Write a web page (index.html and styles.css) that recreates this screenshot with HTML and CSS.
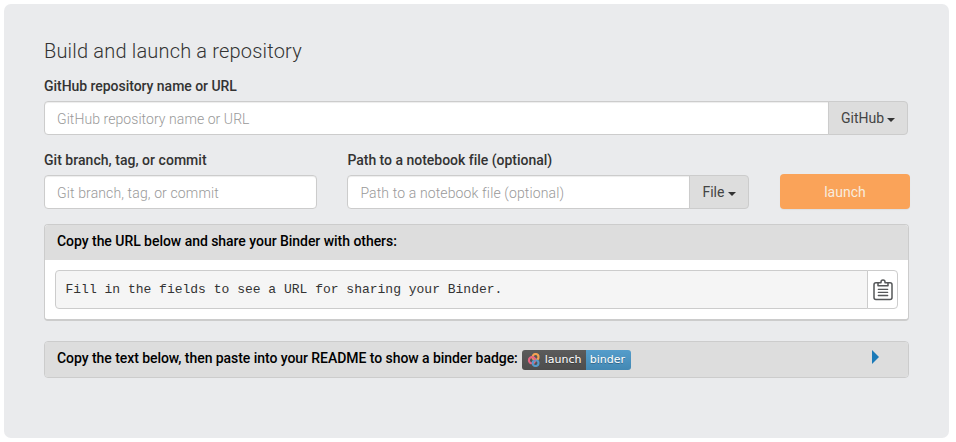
FILE: index.html
```html
<!DOCTYPE html>
<html lang="en">
<head>
<meta charset="utf-8">
<title>Binder</title>
<link rel="stylesheet" href="styles.css">
</head>
<body>
<form class="launcher">
  <h1 class="title">Build and launch a repository</h1>
  <label class="label label-repo">GitHub repository name or URL</label>
  <div class="group repo">
    <div class="field hint-repo">GitHub repository name or URL</div>
    <button type="button" class="select provider"><span>GitHub</span><i class="caret"></i></button>
  </div>
  <div class="row">
    <div class="ref">
      <label class="label label-ref">Git branch, tag, or commit</label>
      <div class="field hint-ref">Git branch, tag, or commit</div>
    </div>
    <div class="path">
      <label class="label label-path">Path to a notebook file (optional)</label>
      <div class="group">
        <div class="field hint-path">Path to a notebook file (optional)</div>
        <button type="button" class="select kind"><span>File</span><i class="caret"></i></button>
      </div>
    </div>
    <button type="button" class="launch">launch</button>
  </div>
  <section class="card share">
    <div class="heading"><span class="share-text">Copy the URL below and share your Binder with others:</span></div>
    <div class="body">
      <pre class="url">Fill in the fields to see a URL for sharing your Binder.</pre>
      <button type="button" class="copy" aria-label="Copy">
        <svg width="20" height="22" viewBox="0 0 20 22" fill="none" stroke="#555759" stroke-width="1.500" stroke-linejoin="round">
          <path d="M5.500 3.800H3q-2 0-2 2v12.700q0 2 2 2h14q2 0 2-2V5.800q0-2-2-2h-2.500"/>
          <path d="M5 3.800v3h10v-3h-3V3q0-2-2-2T8 3v.8z"/>
          <path d="M5.300 10.300h9.400M5.300 13.300h9.400M5.300 16.500h9.400" stroke-linecap="round" stroke-width="1.300"/>
        </svg>
      </button>
    </div>
  </section>
  <section class="card badge-card">
    <div class="heading"><span class="badge-text">Copy the text below, then paste into your README to show a binder badge:</span>
      <span class="badge">
        <span class="badge-left">
          <svg width="14" height="14" viewBox="0 0 14 14" fill="none" stroke-width="2.100">
            <circle cx="5" cy="7.200" r="3.100" stroke="#e66581"/>
            <circle cx="8.600" cy="3.900" r="2.900" stroke="#f5a252"/>
            <circle cx="8.600" cy="10.100" r="2.900" stroke="#579aca"/>
            <path d="M5 4.100a3.100 3.100 0 0 1 3.100 3.100" stroke="#e66581"/>
          </svg>
          <span>launch</span>
        </span>
        <span class="badge-right">binder</span>
      </span>
      <i class="arrow"></i>
    </div>
  </section>
</form>
</body>
</html>
```
FILE: styles.css
```css
* { box-sizing: border-box; }
body { margin: 4px 7px 4px 4px; background: #fff; font: 14px/20px Roboto, sans-serif; color: #333; }
.launcher { height: 434px; padding: 36px 40px 0; background: #eaebed; border-radius: 7px; }
.title { margin: 0; height: 36px; font-size: 20px; line-height: 22px; font-weight: 300; color: #333; letter-spacing: 0.180px; }
.label { display: block; height: 25px; line-height: 20px; font-weight: 500; }
.label-repo { letter-spacing: -0.040px; }
.label-ref { letter-spacing: 0.030px; }
.label-path { letter-spacing: -0.020px; }
button { font: inherit; color: #333; margin: 0; }
.group { display: flex; }
.repo { width: 864px; }
.field { flex: 1; height: 34px; padding: 7px 12px 0; border: 1px solid #ccc; border-radius: 4px; background: #fff; color: #999; font-weight: 300; box-shadow: inset 0 1px 1px rgba(0,0,0,.075); white-space: nowrap; }
.hint-repo { letter-spacing: 0.070px; }
.hint-ref { letter-spacing: 0.130px; }
.hint-path { letter-spacing: 0.130px; }
.group .field { border-radius: 4px 0 0 4px; }
.select { display: flex; align-items: center; height: 34px; margin-left: -1px; padding: 0 12px; background: #ddd; border: 1px solid #ccc; border-radius: 0 4px 4px 0; justify-content: space-between; color: #444; }
.provider { width: 80px; }
.kind { width: 60px; }
.caret { border: 4px solid transparent; border-top-color: #333; border-bottom: 0; margin-top: 3px; }
.row { display: flex; width: 866px; margin-top: 15px; }
.ref { flex: none; width: 273px; margin-right: 30px; }
.path { flex: none; width: 402px; margin-left: 0.400px; margin-right: 30.600px; }
.launch { width: 130px; height: 35px; margin-top: 24px; flex: none; background: #faa359; color: #f7ecdf; border: 0; border-radius: 4px; box-shadow: 0 1px 1px rgba(0,0,0,.05); }
.card { width: 865px; border: 1px solid #ccc; border-radius: 4px; background: #fff; overflow: hidden; }
.heading { display: flex; height: 35px; padding: 6px 12px 0; background: #ddd; color: #000; font-weight: 500; white-space: nowrap; }
.share { height: 97px; margin-top: 15px; border-bottom-width: 2px; }
.share-text { letter-spacing: -0.040px; }
.badge-text { letter-spacing: -0.055px; }
.body { display: flex; padding: 10px; }
.url { flex: 1; margin: 0; height: 39px; padding: 9px 10px 0 9.500px; font: 13px/20px "Liberation Mono", monospace; background: #f5f5f5; border: 1px solid #ccc; border-radius: 4px 0 0 4px; }
.copy { display: flex; align-items: center; justify-content: center; width: 31px; height: 39px; margin-left: -1px; padding: 0; background: #fff; border: 1px solid #ccc; border-radius: 0 4px 4px 0; }
.badge-card { height: 37px; margin-top: 20px; }
.badge { display: flex; width: 109px; height: 20px; margin: 2px 0 0 4px; border-radius: 3px; overflow: hidden; font: 11px/20px "DejaVu Sans", sans-serif; color: #fff; text-shadow: 0 1px 0 rgba(1,1,1,.3); }
.badge-left { display: flex; align-items: center; width: 64px; padding-left: 5px; gap: 4px; background: linear-gradient(#5b5b5b, #4d4d4d); }
.badge-right { width: 45px; padding-left: 4px; background: linear-gradient(#559dcb, #4388b3); }
.arrow { margin: 2px 17px 0 auto; align-self: flex-start; border: 7px solid transparent; border-left: 7px solid #1b7ab8; border-right: 0; }
```
